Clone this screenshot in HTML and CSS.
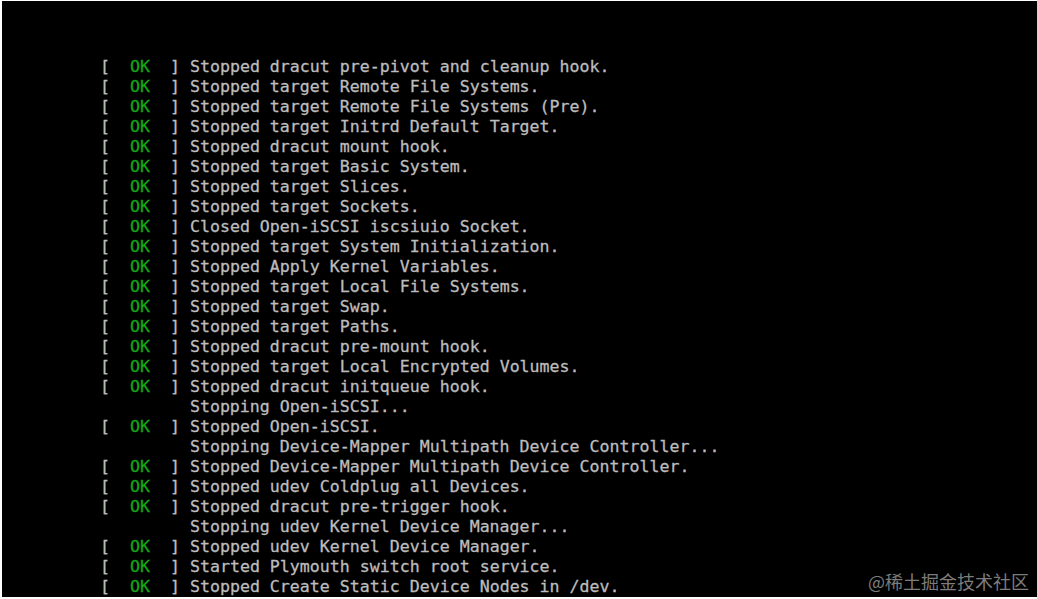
FILE: index.html
```html
<!DOCTYPE html>
<html>
<head>
<meta charset="utf-8">
<link rel="stylesheet" href="styles.css">
</head>
<body>
<div class="screen">
<div class="console">
<div class="line"><span class="br">[  </span><span class="ok">OK</span><span class="br">  ] </span>Stopped dracut pre-pivot and cleanup hook.</div>
<div class="line"><span class="br">[  </span><span class="ok">OK</span><span class="br">  ] </span>Stopped target Remote File Systems.</div>
<div class="line"><span class="br">[  </span><span class="ok">OK</span><span class="br">  ] </span>Stopped target Remote File Systems (Pre).</div>
<div class="line"><span class="br">[  </span><span class="ok">OK</span><span class="br">  ] </span>Stopped target Initrd Default Target.</div>
<div class="line"><span class="br">[  </span><span class="ok">OK</span><span class="br">  ] </span>Stopped dracut mount hook.</div>
<div class="line"><span class="br">[  </span><span class="ok">OK</span><span class="br">  ] </span>Stopped target Basic System.</div>
<div class="line"><span class="br">[  </span><span class="ok">OK</span><span class="br">  ] </span>Stopped target Slices.</div>
<div class="line"><span class="br">[  </span><span class="ok">OK</span><span class="br">  ] </span>Stopped target Sockets.</div>
<div class="line"><span class="br">[  </span><span class="ok">OK</span><span class="br">  ] </span>Closed Open-iSCSI iscsiuio Socket.</div>
<div class="line"><span class="br">[  </span><span class="ok">OK</span><span class="br">  ] </span>Stopped target System Initialization.</div>
<div class="line"><span class="br">[  </span><span class="ok">OK</span><span class="br">  ] </span>Stopped Apply Kernel Variables.</div>
<div class="line"><span class="br">[  </span><span class="ok">OK</span><span class="br">  ] </span>Stopped target Local File Systems.</div>
<div class="line"><span class="br">[  </span><span class="ok">OK</span><span class="br">  ] </span>Stopped target Swap.</div>
<div class="line"><span class="br">[  </span><span class="ok">OK</span><span class="br">  ] </span>Stopped target Paths.</div>
<div class="line"><span class="br">[  </span><span class="ok">OK</span><span class="br">  ] </span>Stopped dracut pre-mount hook.</div>
<div class="line"><span class="br">[  </span><span class="ok">OK</span><span class="br">  ] </span>Stopped target Local Encrypted Volumes.</div>
<div class="line"><span class="br">[  </span><span class="ok">OK</span><span class="br">  ] </span>Stopped dracut initqueue hook.</div>
<div class="line">         Stopping Open-iSCSI...</div>
<div class="line"><span class="br">[  </span><span class="ok">OK</span><span class="br">  ] </span>Stopped Open-iSCSI.</div>
<div class="line">         Stopping Device-Mapper Multipath Device Controller...</div>
<div class="line"><span class="br">[  </span><span class="ok">OK</span><span class="br">  ] </span>Stopped Device-Mapper Multipath Device Controller.</div>
<div class="line"><span class="br">[  </span><span class="ok">OK</span><span class="br">  ] </span>Stopped udev Coldplug all Devices.</div>
<div class="line"><span class="br">[  </span><span class="ok">OK</span><span class="br">  ] </span>Stopped dracut pre-trigger hook.</div>
<div class="line">         Stopping udev Kernel Device Manager...</div>
<div class="line"><span class="br">[  </span><span class="ok">OK</span><span class="br">  ] </span>Stopped udev Kernel Device Manager.</div>
<div class="line"><span class="br">[  </span><span class="ok">OK</span><span class="br">  ] </span>Started Plymouth switch root service.</div>
<div class="line"><span class="br">[  </span><span class="ok">OK</span><span class="br">  ] </span>Stopped Create Static Device Nodes in /dev.</div>
</div>
<div class="watermark">@稀土掘金技术社区</div>
</div>
</body>
</html>
```

FILE: styles.css
```css
html, body {
  margin: 0;
  padding: 0;
  background: #ffffff;
  width: 1037px;
  height: 599px;
  overflow: hidden;
}

.screen {
  position: relative;
  box-sizing: border-box;
  margin: 1px 0 0 2px;
  width: 1035px;
  height: 596px;
  background: #000000;
  overflow: hidden;
}

.console {
  padding: 56px 0 0 98px;
  font-family: "DejaVu Sans Mono", "Liberation Mono", monospace;
  font-size: 16.6px;
  line-height: 20px;
  color: #bcbcbc;
  -webkit-text-stroke: 0.3px currentColor;
}

.line {
  height: 20px;
  white-space: pre;
}

.ok {
  color: #14a814;
}

.watermark {
  position: absolute;
  right: 8px;
  bottom: 6px;
  font-family: "Noto Sans CJK SC", "Noto Sans", sans-serif;
  font-size: 18px;
  color: #7c7c7c;
  line-height: 20px;
}
```
